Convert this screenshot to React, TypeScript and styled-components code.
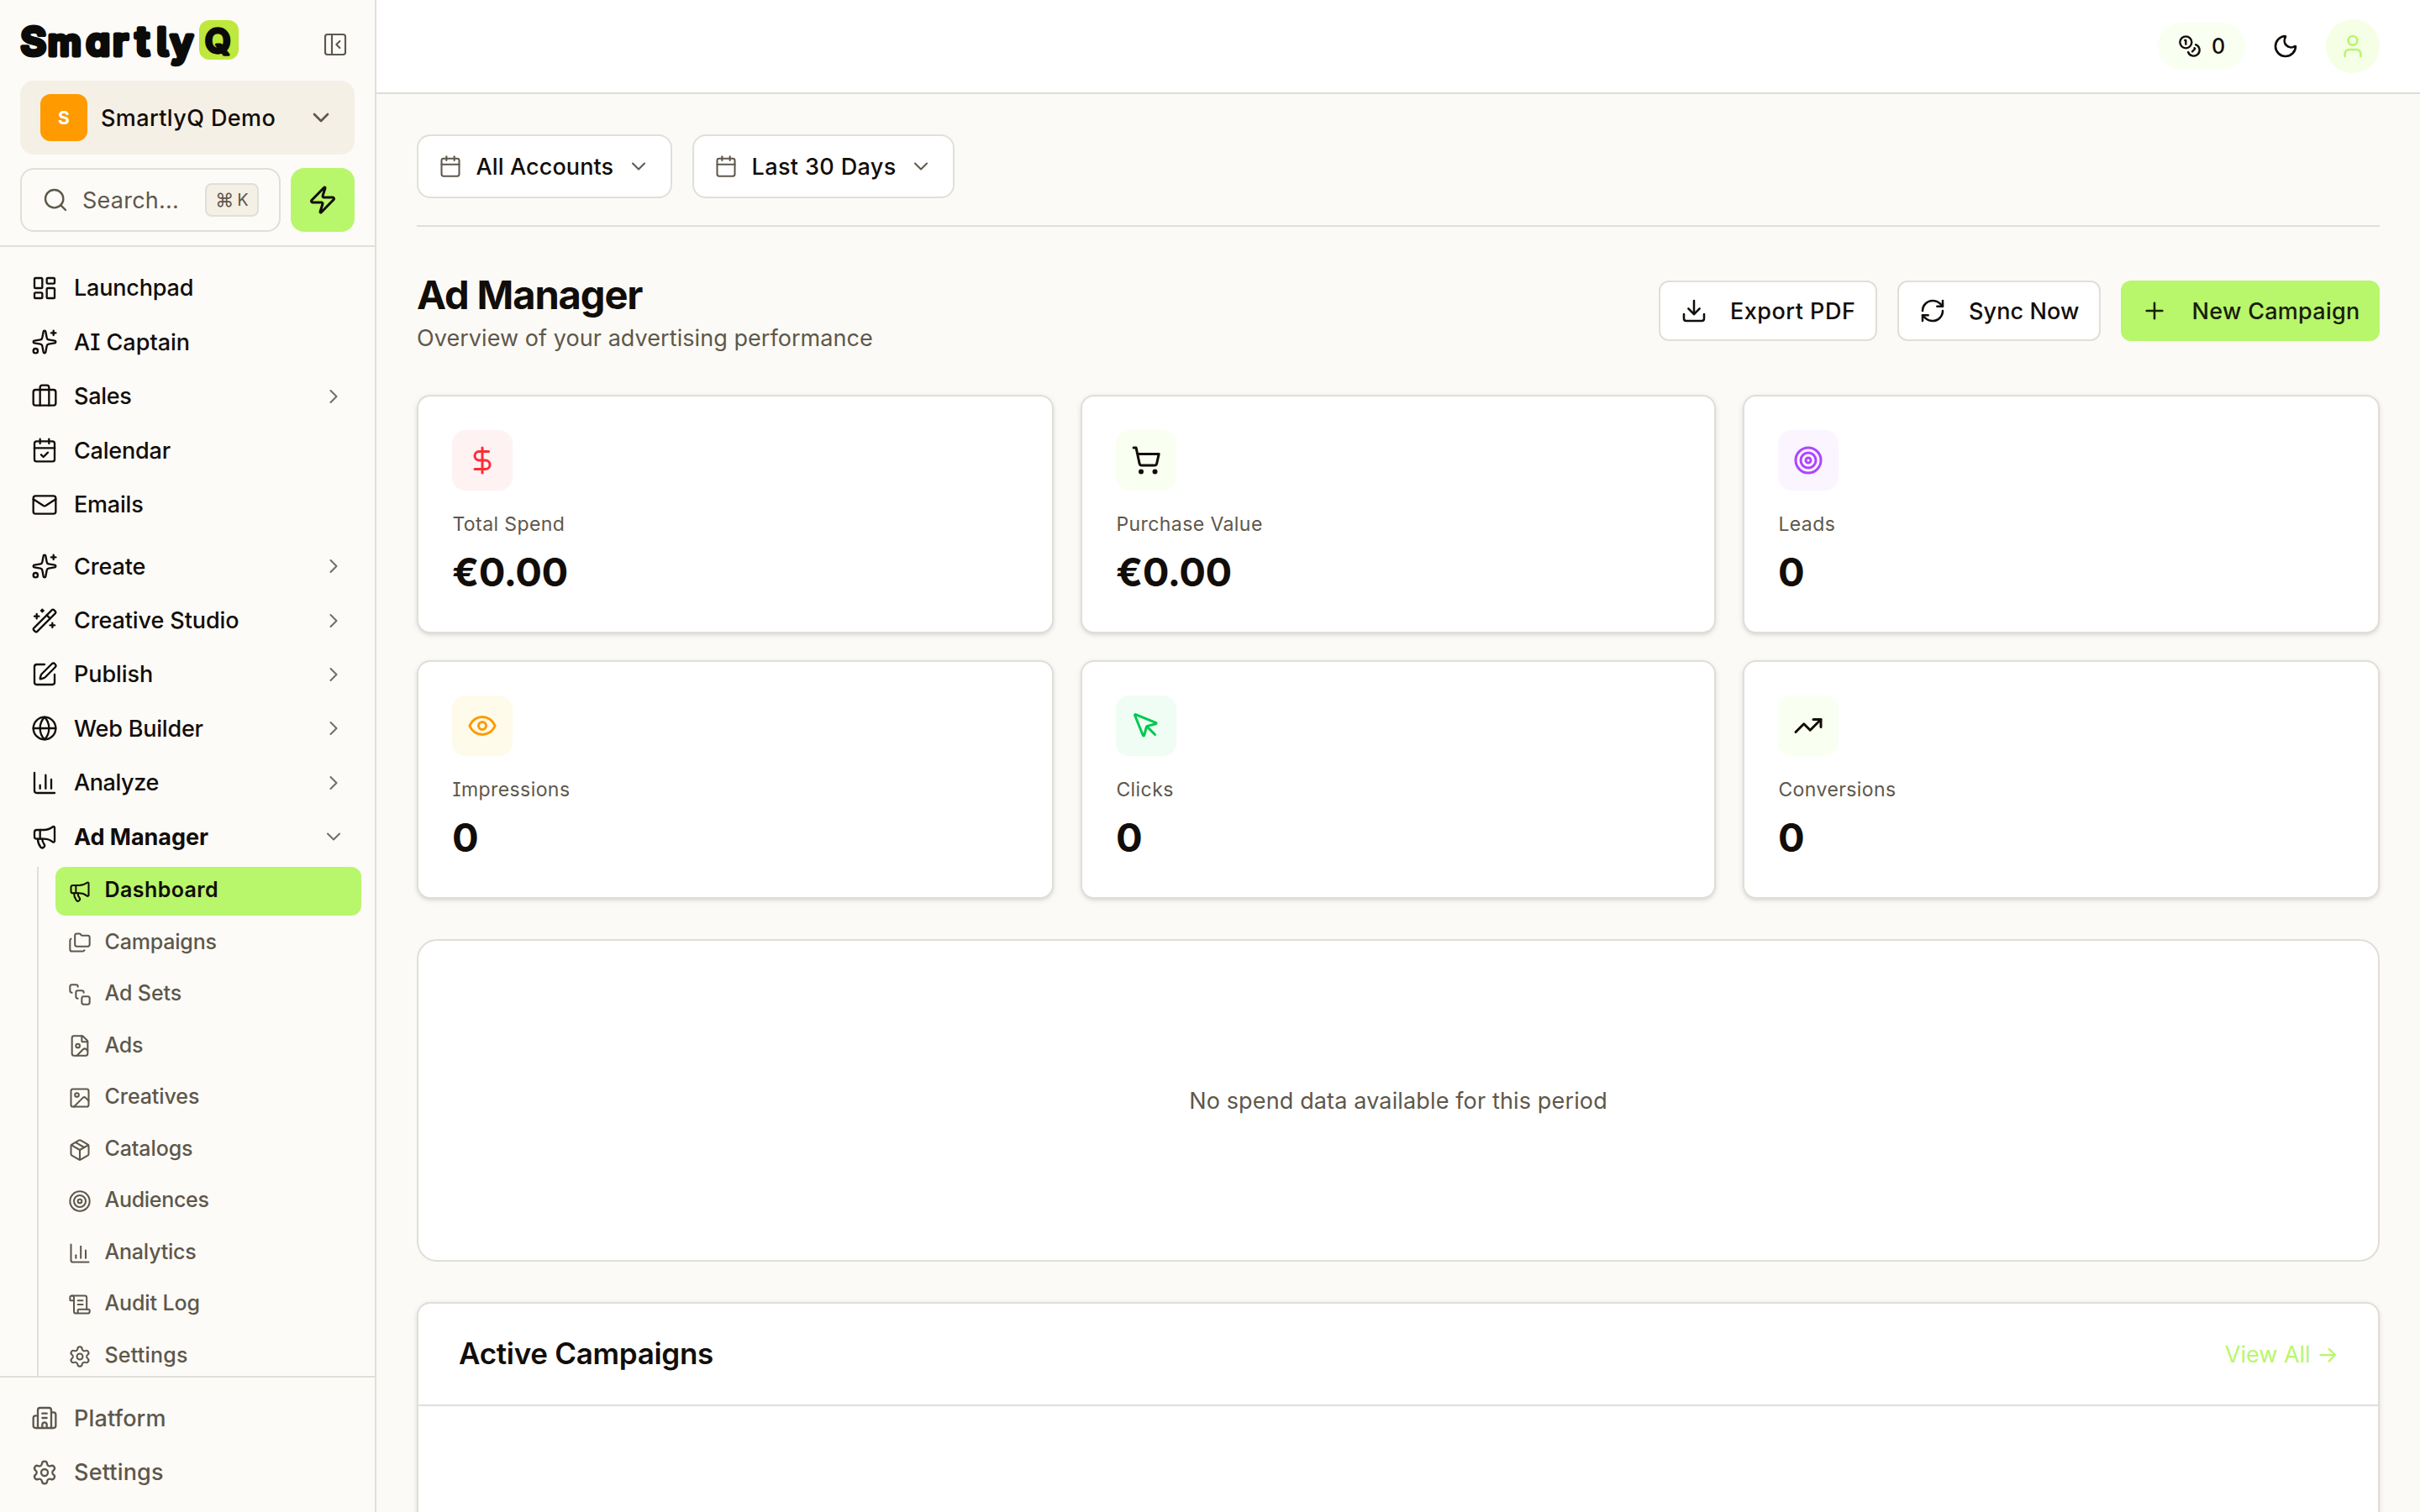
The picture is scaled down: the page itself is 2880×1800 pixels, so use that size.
import React from 'react';
import {
  Building2,
  Calendar,
  CalendarCheck,
  ChartColumn,
  ChevronDown,
  ChevronRight,
  DollarSign,
  Download,
  Eye,
  FileImage,
  Folders,
  Globe,
  Image,
  LayoutDashboard,
  LucideIcon,
  Mail,
  Briefcase,
  Megaphone,
  Moon,
  MousePointer,
  Package,
  PanelLeftClose,
  Plus,
  RefreshCw,
  ScrollText,
  Search,
  Settings,
  ShoppingCart,
  Sparkles,
  SquarePen,
  SquareStack,
  Target,
  TrendingUp,
  User,
  WandSparkles,
  Zap,
} from 'lucide-react';
import styled, { createGlobalStyle } from 'styled-components';

const color = {
  ink: '#120d09',
  muted: '#5e574b',
  line: '#e0dfd8',
  cardLine: '#e1ded8',
  page: '#fbfaf6',
  sidebar: '#fcfbf8',
  sand: '#f5f0e6',
  lime: '#b8f66b',
};

const GlobalStyle = createGlobalStyle`
  * {
    box-sizing: border-box;
  }
  body {
    margin: 0;
    overflow: hidden;
    background: ${color.page};
    color: ${color.ink};
    font-family: Inter, 'Liberation Sans', sans-serif;
    font-feature-settings: 'cv08' 1;
    font-size: 27px;
  }
  svg {
    flex: none;
    display: block;
  }
`;

const Shell = styled.div`
  display: flex;
  width: 2880px;
  height: 1800px;
  overflow: hidden;
`;

// letter spacing is tuned per label, see `track`
const Label = styled.span<{ $track?: number }>`
  white-space: nowrap;
  letter-spacing: ${p => p.$track || 0}px;
`;

/* ---------- sidebar ---------- */

const Sidebar = styled.aside`
  flex: none;
  display: flex;
  flex-direction: column;
  width: 448px;
  background: ${color.sidebar};
  border-right: 2px solid ${color.line};
`;

const SidebarTop = styled.div`
  flex: none;
  height: 294px;
  padding: 24px 24px 0;
  border-bottom: 2px solid ${color.line};
`;

const Brand = styled.div`
  display: flex;
  justify-content: space-between;
  height: 72px;
`;

const CollapseButton = styled.div`
  padding: 13px 7px 0 0;
  color: ${color.muted};
`;

const LogoSvg = styled.svg`
  overflow: visible;
`;

const Wordmark = styled.text<{ $outline?: number }>`
  font-family: Inter, sans-serif;
  font-weight: 600;
  font-feature-settings: 'cv05' 1, 'cv11' 1;
  fill: #0b0b09;
  stroke: #0b0b09;
  stroke-width: ${p => p.$outline || 5}px;
  stroke-linejoin: round;
`;

const Workspace = styled.div`
  display: flex;
  align-items: center;
  height: 88px;
  padding: 0 24px;
  border-radius: 16px;
  background: ${color.sand};
  font-weight: 500;

  svg {
    margin-left: auto;
    color: ${color.muted};
  }
`;

const WorkspaceBadge = styled.div`
  display: flex;
  align-items: center;
  justify-content: center;
  width: 56px;
  height: 56px;
  margin-right: 16px;
  border-radius: 12px;
  background: #ff9a00;
  color: #fff;
  font-size: 21px;
  font-weight: 700;
`;

const SearchRow = styled.div`
  display: flex;
  gap: 12px;
  margin-top: 16px;
`;

const SearchBox = styled.div`
  display: flex;
  align-items: center;
  width: 310px;
  height: 76px;
  padding: 0 24px;
  border: 2px solid ${color.line};
  border-radius: 16px;
  color: ${color.muted};

  svg {
    margin-right: 16px;
  }
`;

const Kbd = styled.kbd`
  display: flex;
  align-items: center;
  justify-content: center;
  gap: 4px;
  width: 64px;
  height: 40px;
  margin-left: auto;
  border: 2px solid ${color.line};
  border-radius: 8px;
  background: ${color.sand};
  font-family: inherit;
  font-size: 20px;
`;

const CommandKey = styled.span`
  font-size: 22px;
`;

const QuickButton = styled.div`
  display: flex;
  align-items: center;
  justify-content: center;
  width: 76px;
  height: 76px;
  border-radius: 16px;
  background: ${color.lime};
`;

const Nav = styled.nav`
  flex: 1;
  min-height: 0;
  overflow: hidden;
  padding-top: 16.8px;
`;

const NavGroup = styled.div`
  & + & {
    margin-top: 9.2px;
  }
`;

const NavRow = styled.div<{ $bold?: boolean; $muted?: boolean }>`
  display: flex;
  align-items: center;
  gap: 19px;
  height: 64.4px;
  padding: 0 35px 0 37px;
  font-weight: ${p => (p.$bold ? 700 : 500)};
  color: ${p => (p.$muted ? color.muted : color.ink)};
`;

const Caret = styled.span`
  margin-left: auto;
  color: #706d69;
`;

const SubNav = styled.div`
  display: flex;
  flex-direction: column;
  gap: 3.55px;
  height: 660px;
  margin: 3.5px 16px 0 44px;
  padding-left: 20px;
  border-left: 2px solid ${color.line};
`;

const SubRow = styled.div<{ $active?: boolean }>`
  flex: none;
  display: flex;
  align-items: center;
  gap: 15.5px;
  height: 58px;
  padding-left: 15px;
  border-radius: 12px;
  background: ${p => (p.$active ? color.lime : 'transparent')};
  color: ${p => (p.$active ? color.ink : color.muted)};
  font-size: 25px;
  font-weight: ${p => (p.$active ? 600 : 500)};

  ${Label} {
    padding-bottom: 3.4px;
  }
`;

const SidebarBottom = styled.div`
  flex: none;
  height: 162px;
  padding-top: 16px;
  border-top: 2px solid ${color.line};
`;

/* ---------- main ---------- */

const Main = styled.main`
  flex: 1;
  min-width: 0;
  display: flex;
  flex-direction: column;
`;

const TopBar = styled.header`
  flex: none;
  display: flex;
  align-items: center;
  justify-content: flex-end;
  gap: 32px;
  height: 112px;
  padding: 0 48px;
  border-bottom: 2px solid #dfdbd7;
  background: #fff;
`;

const Credits = styled.div`
  display: flex;
  align-items: center;
  gap: 12px;
  width: 104px;
  height: 56px;
  padding-left: 24px;
  border-radius: 28px;
  background: #f9fff1;
  font-size: 25px;
  font-weight: 500;
`;

const Avatar = styled.div`
  display: flex;
  align-items: center;
  justify-content: center;
  width: 64px;
  height: 64px;
  border-radius: 50%;
  background: #f4ffe6;
  color: ${color.lime};
`;

const Content = styled.div`
  flex: 1;
  min-height: 0;
  padding: 48px 48px 0;
`;

const Filters = styled.div`
  display: flex;
  gap: 24px;
  height: 110px;
  border-bottom: 2px solid ${color.line};
`;

const FilterButton = styled.div<{ $width: number }>`
  display: flex;
  align-items: center;
  width: ${p => p.$width}px;
  height: 76px;
  padding: 0 24px;
  border: 2px solid ${color.line};
  border-radius: 16px;
  background: #fff;
  font-weight: 500;

  svg {
    color: ${color.muted};
  }
  ${Label} {
    margin-left: 16.6px;
  }
  svg:last-child {
    margin-left: auto;
  }
`;

const PageHead = styled.div`
  display: flex;
  justify-content: space-between;
  height: 200px;
  padding-top: 51px;
`;

const Title = styled.h1`
  margin: 0;
  font-size: 47px;
  font-weight: 700;
  line-height: 60px;
  letter-spacing: -1.08px;
`;

const Subtitle = styled.p`
  margin: 3px 0 0;
  color: ${color.muted};
  line-height: 38px;
  letter-spacing: 0.06px;
`;

const Actions = styled.div`
  display: flex;
  gap: 24px;
  padding-top: 13px;
`;

const Action = styled.div<{ $width: number; $primary?: boolean }>`
  display: flex;
  align-items: center;
  gap: ${p => (p.$primary ? 28.6 : 27)}px;
  width: ${p => p.$width}px;
  height: 72px;
  padding-left: 24px;
  border: ${p => (p.$primary ? 'none' : `2px solid ${color.cardLine}`)};
  border-radius: 12px;
  background: ${p => (p.$primary ? color.lime : '#fff')};
  color: ${p => (p.$primary ? '#17200c' : color.ink)};
  font-weight: 500;
`;

const Stats = styled.div`
  display: grid;
  grid-template-columns: 758px 756px 758px;
  gap: 32px;
`;

const Card = styled.section`
  border: 2px solid ${color.cardLine};
  border-radius: 16px;
  background: #fff;
  box-shadow: 0 2px 6px rgba(0, 0, 0, 0.1), 0 2px 4px -2px rgba(0, 0, 0, 0.1);
`;

const StatCard = styled(Card)`
  height: 284px;
  padding: 40px;
`;

const StatIcon = styled.div<{ $fg: string; $bg: string }>`
  display: flex;
  align-items: center;
  justify-content: center;
  width: 72px;
  height: 72px;
  border-radius: 16px;
  background: ${p => p.$bg};
  color: ${p => p.$fg};
`;

const StatName = styled.div`
  margin-top: 22px;
  padding-left: 0.4px;
  color: ${color.muted};
  font-size: 23px;
  line-height: 36px;
  letter-spacing: 0.42px;
`;

const StatValue = styled.div`
  margin-top: 7px;
  font-size: 47px;
  font-weight: 700;
  line-height: 64px;
  letter-spacing: -0.5px;
`;

const ChartCard = styled.section`
  display: flex;
  align-items: center;
  justify-content: center;
  height: 384px;
  margin: 48px 0;
  border: 2px solid ${color.cardLine};
  border-radius: 24px;
  background: #fff;
  color: ${color.muted};
`;

const CampaignsCard = styled(Card)`
  height: 400px;
`;

const CampaignsHead = styled.div`
  display: flex;
  align-items: center;
  justify-content: space-between;
  height: 122px;
  padding: 0 47px 0 48px;
  border-bottom: 2px solid ${color.cardLine};
`;

const SectionTitle = styled.h2`
  margin: 0;
  padding-bottom: 2px;
  font-size: 35px;
  font-weight: 600;
  letter-spacing: -0.29px;
`;

const ViewAll = styled.a`
  color: ${color.lime};
`;

interface NavItem {
  icon: LucideIcon;
  name: string;
  track: number;
  caret?: 'right' | 'down';
}

const mainGroups: NavItem[][] = [
  [
    { icon: LayoutDashboard, name: 'Launchpad', track: -0.18 },
    { icon: Sparkles, name: 'AI Captain', track: 0 },
    { icon: Briefcase, name: 'Sales', track: -0.3, caret: 'right' },
    { icon: CalendarCheck, name: 'Calendar', track: -0.2 },
    { icon: Mail, name: 'Emails', track: -0.2 },
  ],
  [
    { icon: Sparkles, name: 'Create', track: -0.12, caret: 'right' },
    { icon: WandSparkles, name: 'Creative Studio', track: -0.1, caret: 'right' },
    { icon: SquarePen, name: 'Publish', track: -0.07, caret: 'right' },
    { icon: Globe, name: 'Web Builder', track: -0.2, caret: 'right' },
    { icon: ChartColumn, name: 'Analyze', track: -0.4, caret: 'right' },
    { icon: Megaphone, name: 'Ad Manager', track: -0.05, caret: 'down' },
  ],
];

const adManagerItems: NavItem[] = [
  { icon: Megaphone, name: 'Dashboard', track: 0.42 },
  { icon: Folders, name: 'Campaigns', track: -0.18 },
  { icon: SquareStack, name: 'Ad Sets', track: -0.1 },
  { icon: FileImage, name: 'Ads', track: -0.2 },
  { icon: Image, name: 'Creatives', track: -0.07 },
  { icon: Package, name: 'Catalogs', track: -0.1 },
  { icon: Target, name: 'Audiences', track: -0.3 },
  { icon: ChartColumn, name: 'Analytics', track: -0.2 },
  { icon: ScrollText, name: 'Audit Log', track: -0.12 },
  { icon: Settings, name: 'Settings', track: 0.2 },
];

const bottomItems: NavItem[] = [
  { icon: Building2, name: 'Platform', track: 0.14 },
  { icon: Settings, name: 'Settings', track: 0.19 },
];

const stats = [
  { icon: DollarSign, name: 'Total Spend', value: '€0.00', fg: '#fb2c36', bg: '#fef2f2' },
  { icon: ShoppingCart, name: 'Purchase Value', value: '€0.00', fg: color.ink, bg: '#f9fff1' },
  { icon: Target, name: 'Leads', value: '0', fg: '#ad46ff', bg: '#faf5ff' },
  { icon: Eye, name: 'Impressions', value: '0', fg: '#fe9a00', bg: '#fffbeb' },
  { icon: MousePointer, name: 'Clicks', value: '0', fg: '#00c950', bg: '#f0fdf4' },
  { icon: TrendingUp, name: 'Conversions', value: '0', fg: color.ink, bg: '#f9fff1' },
];

// the wordmark is set on one line, each letter is widened with tspan sizes
const Logo = () => (
  <LogoSvg width="264" height="64" viewBox="24 24 264 64">
    <rect x="237" y="24" width="47" height="47" rx="12" fill="#bfe83c" />
    <Wordmark>
      <tspan fontSize="47" x="24.6" y="66">
        S
      </tspan>
      <tspan fontSize="44" x="57" y="66">
        m
      </tspan>
      <tspan fontSize="45.5" x="102.5" y="66">
        a
      </tspan>
      <tspan fontSize="46" x="134.2" y="66">
        r
      </tspan>
      <tspan fontSize="48" x="161" y="66">
        t
      </tspan>
      <tspan fontSize="45" x="186.6" y="66">
        l
      </tspan>
      <tspan fontSize="46" x="202.8" y="67">
        y
      </tspan>
    </Wordmark>
    <Wordmark $outline={3.4} fontSize="40" x="243.8" y="62.5">
      Q
    </Wordmark>
  </LogoSvg>
);

const CoinsIcon = () => (
  <svg
    width="28"
    height="28"
    viewBox="0 0 24 24"
    fill="none"
    stroke="currentColor"
    strokeWidth="2"
    strokeLinecap="round"
    strokeLinejoin="round"
  >
    <circle cx="8" cy="8" r="6" />
    <path d="M18.09 10.37A6 6 0 1 1 10.34 18" />
    <path d="M7 6h1v4" />
    <path d="m16.71 13.88.7.71-2.82 2.82" />
  </svg>
);

const NavEntry = ({ item, muted }: { item: NavItem; muted?: boolean }) => (
  <NavRow $bold={item.caret === 'down'} $muted={muted}>
    <item.icon size={32} strokeWidth={1.75} />
    <Label $track={item.track}>{item.name}</Label>
    {item.caret && (
      <Caret>
        {item.caret === 'down' ? (
          <ChevronDown size={28} strokeWidth={1.75} />
        ) : (
          <ChevronRight size={28} strokeWidth={1.75} />
        )}
      </Caret>
    )}
  </NavRow>
);

const AppSidebar = () => (
  <Sidebar>
    <SidebarTop>
      <Brand>
        <Logo />
        <CollapseButton>
          <PanelLeftClose size={32} strokeWidth={1.6} />
        </CollapseButton>
      </Brand>
      <Workspace>
        <WorkspaceBadge>S</WorkspaceBadge>
        <Label $track={0.4}>SmartlyQ Demo</Label>
        <ChevronDown size={32} strokeWidth={2} />
      </Workspace>
      <SearchRow>
        <SearchBox>
          <Search size={32} strokeWidth={1.8} />
          <Label $track={0.23}>Search...</Label>
          <Kbd>
            <CommandKey>⌘</CommandKey>
            <span>K</span>
          </Kbd>
        </SearchBox>
        <QuickButton>
          <Zap size={36} strokeWidth={2} />
        </QuickButton>
      </SearchRow>
    </SidebarTop>
    <Nav>
      {mainGroups.map((group, i) => (
        <NavGroup key={i}>
          {group.map(item => (
            <NavEntry key={item.name} item={item} />
          ))}
        </NavGroup>
      ))}
      <SubNav>
        {adManagerItems.map((item, i) => (
          <SubRow key={item.name} $active={i === 0}>
            <item.icon size={28} strokeWidth={1.75} />
            <Label $track={item.track}>{item.name}</Label>
          </SubRow>
        ))}
      </SubNav>
    </Nav>
    <SidebarBottom>
      {bottomItems.map(item => (
        <NavEntry key={item.name} item={item} muted />
      ))}
    </SidebarBottom>
  </Sidebar>
);

const App = () => (
  <Shell>
    <GlobalStyle />
    <AppSidebar />
    <Main>
      <TopBar>
        <Credits>
          <CoinsIcon />
          <span>0</span>
        </Credits>
        <Moon size={32} />
        <Avatar>
          <User size={32} />
        </Avatar>
      </TopBar>
      <Content>
        <Filters>
          <FilterButton $width={304}>
            <Calendar size={28} strokeWidth={1.75} />
            <Label $track={0.11}>All Accounts</Label>
            <ChevronDown size={28} strokeWidth={1.75} />
          </FilterButton>
          <FilterButton $width={312}>
            <Calendar size={28} strokeWidth={1.75} />
            <Label $track={0.38}>Last 30 Days</Label>
            <ChevronDown size={28} strokeWidth={1.75} />
          </FilterButton>
        </Filters>
        <PageHead>
          <div>
            <Title>Ad Manager</Title>
            <Subtitle>Overview of your advertising performance</Subtitle>
          </div>
          <Actions>
            <Action $width={260}>
              <Download size={32} strokeWidth={1.9} />
              <Label $track={0.5}>Export PDF</Label>
            </Action>
            <Action $width={242}>
              <RefreshCw size={32} strokeWidth={1.9} />
              <Label $track={0.1}>Sync Now</Label>
            </Action>
            <Action $width={308} $primary>
              <Plus size={32} strokeWidth={1.9} />
              <Label $track={0.28}>New Campaign</Label>
            </Action>
          </Actions>
        </PageHead>
        <Stats>
          {stats.map(s => (
            <StatCard key={s.name}>
              <StatIcon $fg={s.fg} $bg={s.bg}>
                <s.icon size={36} />
              </StatIcon>
              <StatName>{s.name}</StatName>
              <StatValue>{s.value}</StatValue>
            </StatCard>
          ))}
        </Stats>
        <ChartCard>
          <Label $track={0.14}>No spend data available for this period</Label>
        </ChartCard>
        <CampaignsCard>
          <CampaignsHead>
            <SectionTitle>Active Campaigns</SectionTitle>
            <ViewAll>View All →</ViewAll>
          </CampaignsHead>
        </CampaignsCard>
      </Content>
    </Main>
  </Shell>
);

export default App;
